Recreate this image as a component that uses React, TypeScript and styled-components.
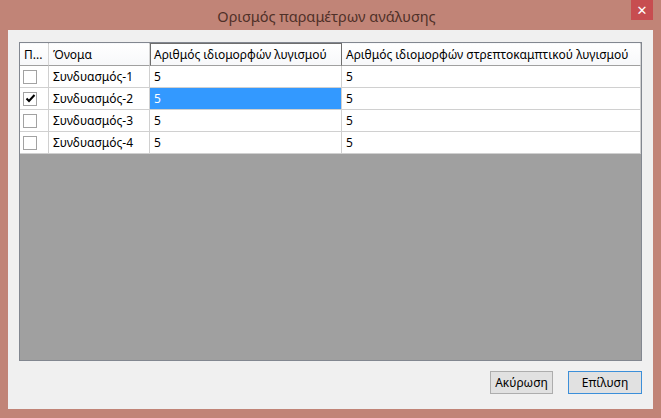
import { Fragment } from 'react';
import styled, { createGlobalStyle } from 'styled-components';

const GlobalStyle = createGlobalStyle`
  html, body {
    margin: 0;
    padding: 0;
    background: #c18477;
  }
  body {
    font-family: "Noto Sans", "Open Sans", "DejaVu Sans", sans-serif;
  }
`;

interface Combo {
  id: number;
  name: string;
  checked: boolean;
  flexural: string;
  torsional: string;
}

const combos: Combo[] = [
  { id: 1, name: 'Συνδυασμός-1', checked: false, flexural: '5', torsional: '5' },
  { id: 2, name: 'Συνδυασμός-2', checked: true, flexural: '5', torsional: '5' },
  { id: 3, name: 'Συνδυασμός-3', checked: false, flexural: '5', torsional: '5' },
  { id: 4, name: 'Συνδυασμός-4', checked: false, flexural: '5', torsional: '5' },
];

const Window = styled.div`
  width: 661px;
  height: 418px;
  display: flex;
  flex-direction: column;
  background: #c18477;
  box-sizing: border-box;
`;

const TitleBar = styled.div`
  height: 30px;
  display: grid;
  grid-template-columns: 1fr auto 1fr;
  padding-right: 8px;
`;

const Title = styled.div`
  grid-column: 2;
  align-self: center;
  font-size: 14.5px;
  color: #4f3028;
  padding-top: 1px;
`;

const CloseButton = styled.div`
  grid-column: 3;
  justify-self: end;
  width: 22px;
  height: 20px;
  background: #c74d50;
  color: #fff;
  font-size: 13px;
  font-weight: bold;
  display: flex;
  align-items: center;
  justify-content: center;
`;

const Client = styled.div`
  flex: 1;
  margin: 0 8px 9px 8px;
  background: #f0f0f0;
  display: flex;
  flex-direction: column;
  padding: 12px 11px 15px 11px;
  gap: 10px;
`;

const Grid = styled.div`
  flex: 1;
  border: 1px solid #828790;
  background: #a0a0a0;
  display: grid;
  grid-template-columns: 29px 101px 192px 1fr;
  grid-template-rows: 23px;
  grid-auto-rows: 22px;
  align-content: start;
  font-size: 12px;
  color: #000;
`;

const HeaderCell = styled.div<{ $active?: boolean }>`
  box-sizing: border-box;
  background: linear-gradient(#ffffff, #f7f8fa);
  border-right: 1px solid ${(p) => (p.$active ? '#6e6e6e' : '#d5d5d5')};
  border-bottom: 1px solid #a0a0a0;
  border-top: 1px solid ${(p) => (p.$active ? '#6e6e6e' : 'transparent')};
  border-left: 1px solid ${(p) => (p.$active ? '#6e6e6e' : 'transparent')};
  padding: 0 3px;
  display: flex;
  align-items: center;
  white-space: nowrap;
  overflow: hidden;
`;

const Cell = styled.div<{ $selected?: boolean }>`
  box-sizing: border-box;
  background: ${(p) => (p.$selected ? '#3399ff' : '#fff')};
  color: ${(p) => (p.$selected ? '#fff' : '#000')};
  border-right: 1px solid #d0d0d0;
  border-bottom: 1px solid #d0d0d0;
  padding: 0 4px;
  display: flex;
  align-items: center;
  white-space: nowrap;
  overflow: hidden;
`;

const CheckCell = styled(Cell)`
  padding: 0 0 0 3px;
`;

const Box = styled.div`
  width: 14px;
  height: 14px;
  box-sizing: border-box;
  border: 1px solid #a2a2a2;
  background: #fff;
  display: flex;
  align-items: center;
  justify-content: center;
`;

const ButtonRow = styled.div`
  display: flex;
  justify-content: flex-end;
  gap: 15px;
`;

const Button = styled.button<{ $default?: boolean; $width: number }>`
  width: ${(p) => p.$width}px;
  height: 23px;
  font-family: inherit;
  font-size: 12px;
  color: #000;
  background: #e1e1e1;
  border: 1px solid ${(p) => (p.$default ? '#3c8fd9' : '#adadad')};
  padding: 0;
`;

const Check = () => (
  <svg width="11" height="11" viewBox="0 0 11 11">
    <path d="M1.5 5.5 L4 8 L9.5 2" stroke="#000" strokeWidth="2" fill="none" />
  </svg>
);

export default function App() {
  return (
    <>
      <GlobalStyle />
      <Window>
        <TitleBar>
          <Title>Ορισμός παραμέτρων ανάλυσης</Title>
          <CloseButton>✕</CloseButton>
        </TitleBar>
        <Client>
          <Grid>
            <HeaderCell>Π...</HeaderCell>
            <HeaderCell>Όνομα</HeaderCell>
            <HeaderCell $active>Αριθμός ιδιομορφών λυγισμού</HeaderCell>
            <HeaderCell>Αριθμός ιδιομορφών στρεπτοκαμπτικού λυγισμού</HeaderCell>
            {combos.map((c) => (
              <Fragment key={c.id}>
                <CheckCell>
                  <Box>{c.checked && <Check />}</Box>
                </CheckCell>
                <Cell>{c.name}</Cell>
                <Cell $selected={c.id === 2}>{c.flexural}</Cell>
                <Cell>{c.torsional}</Cell>
              </Fragment>
            ))}
          </Grid>
          <ButtonRow>
            <Button $width={63}>Ακύρωση</Button>
            <Button $width={74} $default>
              Επίλυση
            </Button>
          </ButtonRow>
        </Client>
      </Window>
    </>
  );
}
